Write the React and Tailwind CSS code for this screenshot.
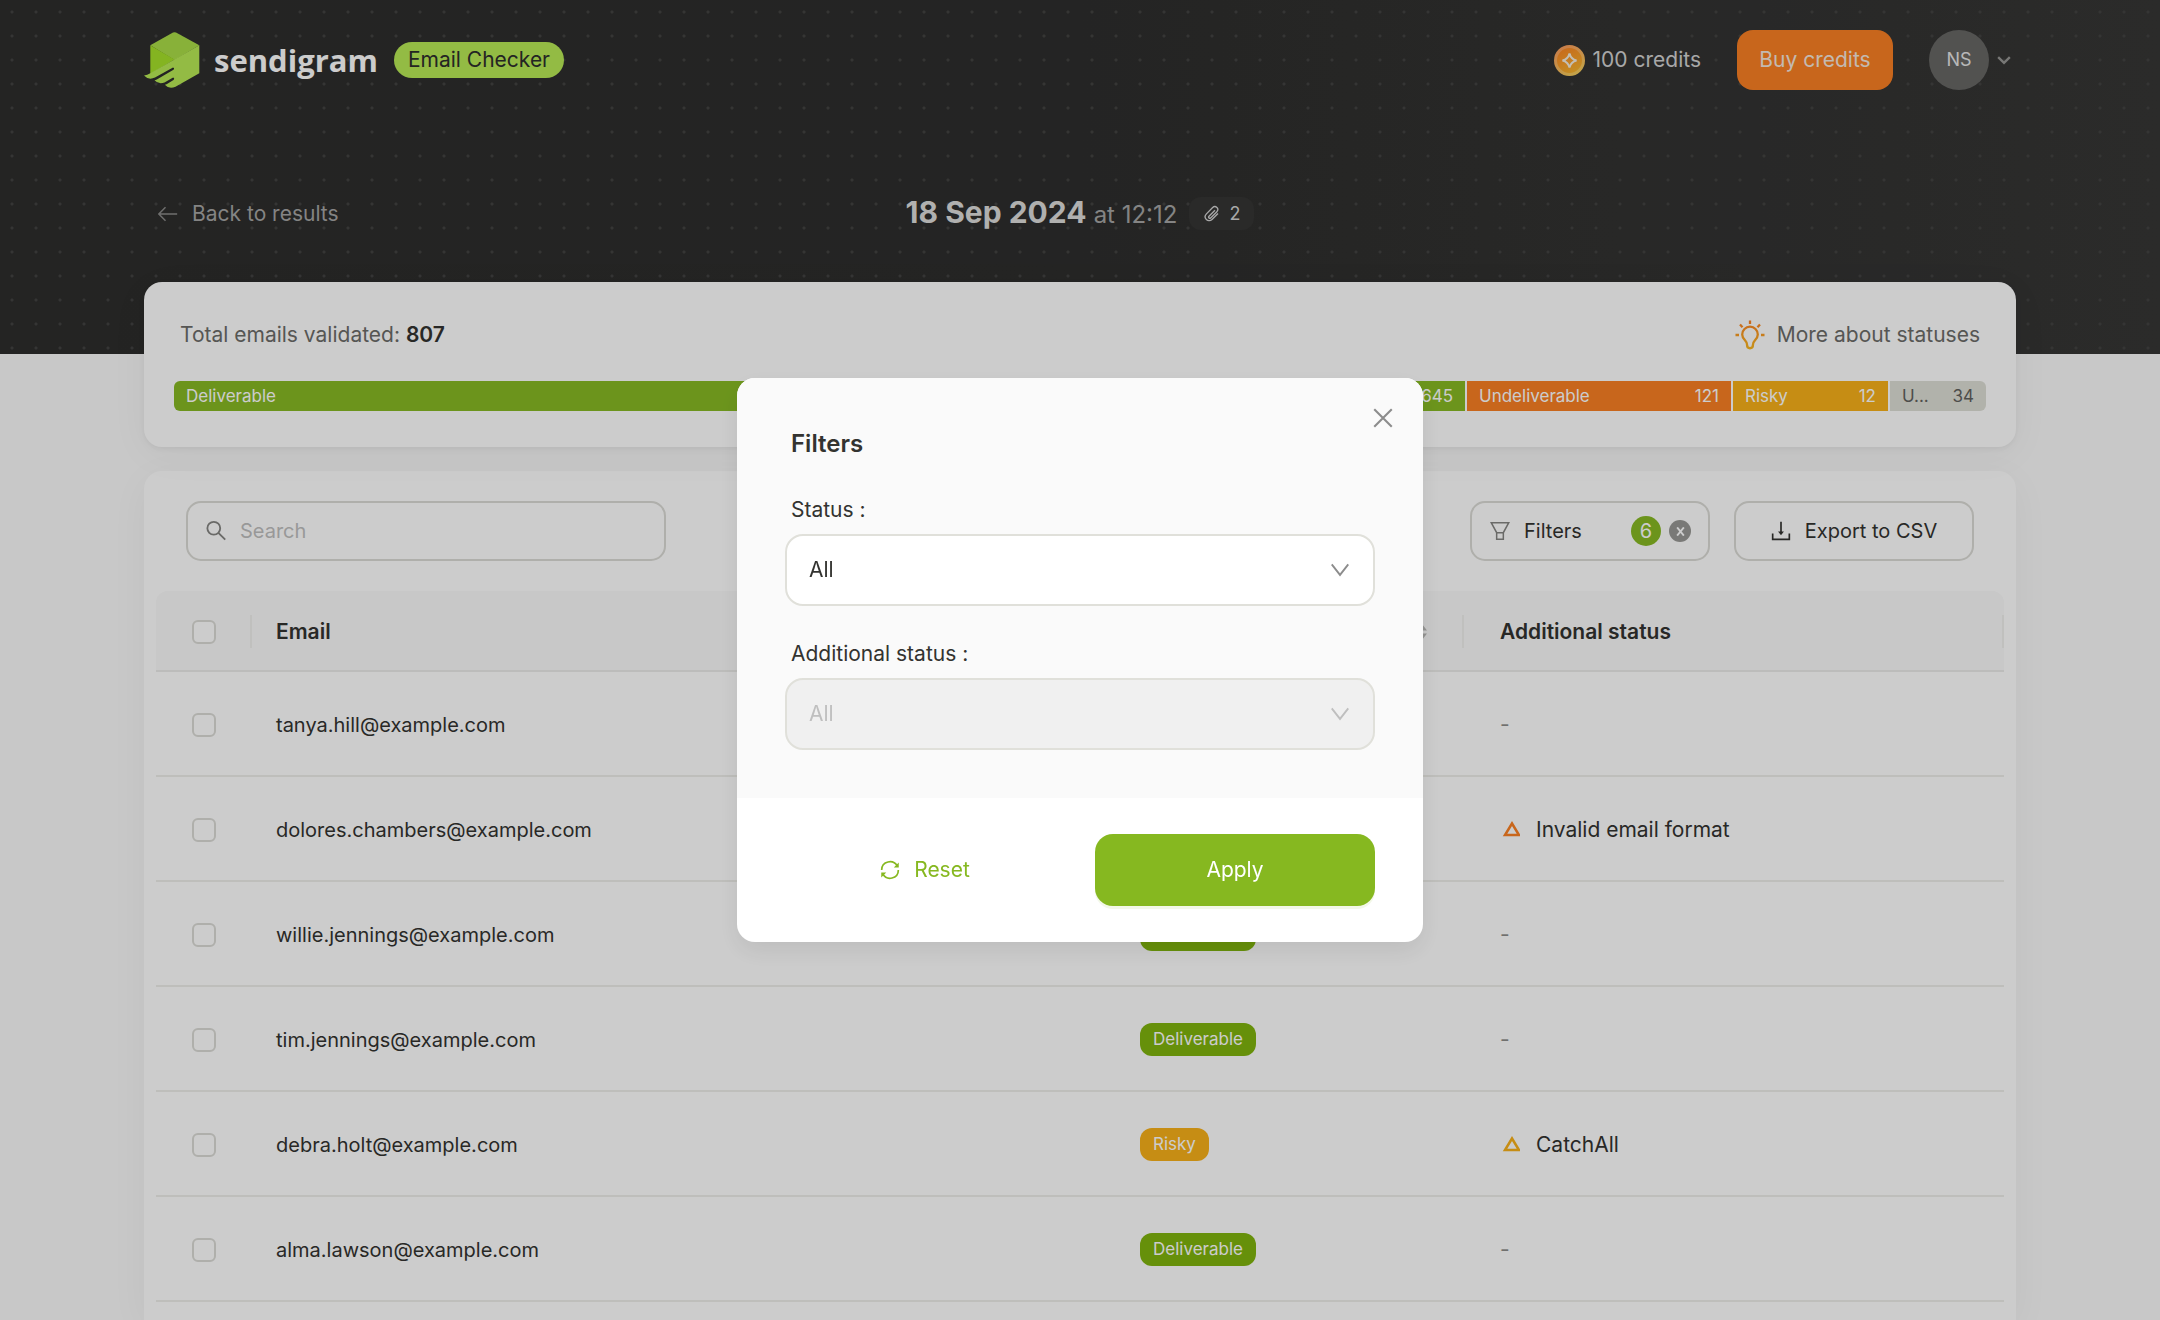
import React, { useState } from 'react';
import clsx from 'clsx';

const segments = [
  { label: 'Deliverable',   count: 645, className: 'flex-1 bg-[#87ba24] text-white'       },
  { label: 'Undeliverable', count: 121, className: 'w-[264px] bg-[#fb8024] text-white'    },
  { label: 'Risky',         count: 12,  className: 'w-[155px] bg-[#f8b119] text-white'    },
  { label: 'U...',          count: 34,  className: 'w-[96px] bg-[#dedfd6] text-[#61615e]' },
];

const rows = [
  { email: 'tanya.hill@example.com',       status: 'Deliverable' },
  { email: 'dolores.chambers@example.com', status: 'Undeliverable', extra: 'Invalid email format' },
  { email: 'willie.jennings@example.com',  status: 'Deliverable' },
  { email: 'tim.jennings@example.com',     status: 'Deliverable' },
  { email: 'debra.holt@example.com',       status: 'Risky', extra: 'CatchAll' },
  { email: 'alma.lawson@example.com',      status: 'Deliverable' },
];

const badgeColors = {
  Deliverable: 'bg-[#80b40d]',
  Undeliverable: 'bg-[#fb8024]',
  Risky: 'bg-[#f8b119]',
};

const Icon = ({ size = 24, width = 1.5, className, children }) => (
  <svg
    width={size}
    height={size}
    viewBox="0 0 24 24"
    fill="none"
    stroke="currentColor"
    strokeWidth={width}
    className={clsx('shrink-0', className)}
    aria-hidden="true"
  >
    {children}
  </svg>
);

const Logo = () => (
  <svg width="56" height="56" viewBox="0 0 56 56" className="shrink-0" aria-hidden="true">
    <path d="M29 .6q1.500-.8 3 0L55.300 13.300 30.500 28 6.300 13.300z" fill="#abde48" />
    <path d="M6.300 13.300 30.500 27.500 6.300 42z" fill="#a5e22a" />
    <path
      d="M55.300 13.300v28L31.500 54.800Q25 57.500 20.800 52.800q1.200-.3 2.200-.9l6.500-4q1.500-1.600-.4-2.300L20.500 50.500Q14.500 52.800 10.500 48.300q1.200-.2 2.300-.9L29.500 37.800q1.500-1.800-.5-2.300L11 45.600Q4.500 48.500 0 43.500q3.300-.4 6.300-2.200z"
      fill="#b8ea56"
    />
  </svg>
);

const CoinIcon = () => (
  <svg width="31" height="31" viewBox="0 0 31 31" fill="none" className="shrink-0" aria-hidden="true">
    <defs>
      <linearGradient id="coin" x1="6" y1="0" x2="22" y2="31" gradientUnits="userSpaceOnUse">
        <stop stopColor="#fb8024" />
        <stop offset="1" stopColor="#f5b82e" />
      </linearGradient>
      <linearGradient id="rim" x1="6" y1="0" x2="22" y2="31" gradientUnits="userSpaceOnUse">
        <stop stopColor="#fb9a5c" />
        <stop offset="1" stopColor="#f5cf5c" />
      </linearGradient>
    </defs>
    <circle cx="15.500" cy="15.500" r="14" fill="url(#coin)" stroke="url(#rim)" strokeWidth="3" />
    <path
      d="M15.500 8.500c1 4 3 6 7 7-4 1-6 3-7 7-1-4-3-6-7-7 4-1 6-3 7-7z"
      stroke="#f4eee2"
      strokeWidth="2"
    />
  </svg>
);

const BulbIcon = () => (
  <svg width="30" height="30" viewBox="0 0 30 30" fill="none" className="shrink-0" aria-hidden="true">
    <defs>
      <linearGradient id="bulb" x1="15" y1="0" x2="15" y2="30" gradientUnits="userSpaceOnUse">
        <stop stopColor="#fb8024" />
        <stop offset="1" stopColor="#f8b920" />
      </linearGradient>
    </defs>
    <path
      d="M12 24.500c0-4-4.800-5-4.800-10a7.800 7.800 0 0 1 15.600 0c0 5-4.800 6-4.800 10 0 5-6 5-6 0zM15 .5V4M5 4.500l2.500 2.700M25 4.500l-2.500 2.700M.5 15H4M26 15h3.500"
      stroke="url(#bulb)"
      strokeWidth="2.300"
    />
  </svg>
);

const WarningIcon = ({ className }) => (
  <svg width="18" height="16" viewBox="0 0 18 16" fill="none" className={className} aria-hidden="true">
    <path d="M10 2.500 17 14H3z" stroke="currentColor" strokeWidth="2.500" />
  </svg>
);

const Checkbox = ({ label }) => (
  <input
    type="checkbox"
    aria-label={label}
    className="block size-6 appearance-none rounded-md border-2 border-[#dbdbd6] bg-white checked:bg-[#87ba24]"
  />
);

const FilterSelect = ({ id, label, disabled }) => (
  <div className="flex flex-col gap-2">
    <label htmlFor={id} className="px-1.5 text-[21px] leading-8 text-[#333330]">{label}</label>
    <div className="relative">
      <select
        id={id}
        disabled={disabled}
        className="block h-[72px] w-full appearance-none rounded-[18px] border-2 border-[#e0e0da] bg-white px-[22px] text-[21px] text-[#333330] opacity-100 disabled:bg-[#f0f0f0] disabled:text-[#bfbfbf]"
      >
        <option>All</option>
      </select>
      <Icon
        size={18}
        width={2.5}
        className={clsx(
          'pointer-events-none absolute top-[27px] right-[26px]',
          disabled ? 'text-[#bfbfbf]' : 'text-[#8c8c8c]'
        )}
      >
        <path d="m1 4.500 11 14 11-14" />
      </Icon>
    </div>
  </div>
);

const Header = () => (
  <header className="h-[354px] bg-[#2d2d2c] bg-[radial-gradient(circle_at_center,#434342_1px,transparent_2px),linear-gradient(90deg,#2d2d2c_0%,#2e2e2d_50%,#363635_100%)] bg-[length:24px_24px,100%_100%] px-36">
    <div className="flex h-[120px] items-center justify-between">
      <a href="#home" className="flex items-center">
        <Logo />
        <span className="ml-3.5 font-['Open_Sans',sans-serif] text-[31px] leading-10 font-bold text-white">sendigram</span>
        <span className="ml-4 rounded-full bg-[#b8ea56] px-3.5 text-[21px] leading-9 text-[#2d2d2c]">Email Checker</span>
      </a>
      <div className="flex items-center">
        <CoinIcon />
        <span className="ml-2 text-[21px] text-[#d3d3d3]">100 credits</span>
        <button className="ml-9 h-15 w-[156px] rounded-2xl bg-[#fb8024] text-[21px] text-[#f4e8de]">Buy credits</button>
        <button className="ml-9 flex items-center gap-2 pr-[5px]" aria-label="Account menu">
          <span className="flex size-15 items-center justify-center rounded-full bg-[#676765] text-lg text-[#e6e6e6]">NS</span>
          <Icon size={14} width={4} className="text-[#969694]">
            <path d="m2 7 10 10L22 7" />
          </Icon>
        </button>
      </div>
    </div>

    <div className="mt-[68px] grid grid-cols-3 items-center">
      <a href="#results" className="flex items-center gap-3.5 pl-3.5 text-[21px] leading-8 text-[#a6a6a5]">
        <Icon size={20} width={1.8} className="text-[#8a8a89]">
          <path d="M23 12H2M9 4l-8 8 8 8" />
        </Icon>
        Back to results
      </a>
      <div className="flex items-center justify-center">
        <h1 className="text-[30px] leading-12 font-bold whitespace-nowrap text-[#dcdcdb]">
          18 Sep 2024 <span className="text-[24px] font-normal text-[#a6a6a5]">at 12:12</span>
        </h1>
        <span className="ml-3 flex h-[33px] items-center gap-2 rounded-xl bg-[#353534] px-3.5 text-lg text-[#d3d3d3]">
          <Icon size={18} width={1.8}>
            <path d="m16 7-8 8c-1.500 1.500.7 3.700 2.200 2.200l8.300-8.300c4-4-2-9-5.600-5.500L4.600 11.800c-5 5 2.300 12.500 7.400 7.400l8-8" />
          </Icon>
          2
        </span>
      </div>
    </div>
  </header>
);

const Summary = () => (
  <section className="relative rounded-[18px] bg-white px-[30px] pt-7 pb-9 shadow-[0_2px_6px_rgba(0,0,0,0.06),0_8px_40px_rgba(0,0,0,0.04)]">
    <div className="flex h-[50px] items-center justify-between px-1.5">
      <p className="text-[21px] text-[#6c6c69]">
        Total emails validated: <b className="font-semibold text-[#333330]">807</b>
      </p>
      <a href="#statuses" className="flex items-center gap-3 text-[21px] text-[#6c6c69]">
        <BulbIcon />
        More about statuses
      </a>
    </div>
    <div className="mt-[21px] flex h-[30px] gap-0.5 overflow-hidden rounded-md text-[17px] leading-[30px]">
      {segments.map((segment) => (
        <div key={segment.label} className={clsx('flex justify-between px-3', segment.className)}>
          <span>{segment.label}</span>
          <span>{segment.count}</span>
        </div>
      ))}
    </div>
  </section>
);

const Toolbar = ({ onFilters }) => (
  <div className="flex items-center gap-6 px-[30px]">
    <label className="mr-auto flex h-15 w-[480px] items-center gap-3 rounded-[15px] border-2 border-[#dbdbd6] px-[18px]">
      <Icon size={22} width={2} className="text-[#858582]">
        <circle cx="8.500" cy="9" r="7" />
        <path d="m13.500 14 7.500 7.500" />
      </Icon>
      <input
        type="search"
        aria-label="Search"
        placeholder="Search"
        className="min-w-0 flex-1 text-xl outline-none placeholder:text-[#bfbfbf]"
      />
    </label>
    <div className="flex h-15 w-60 items-center rounded-[15px] border-2 border-[#dbdbd6] pr-[17px] pl-[18px]">
      <button onClick={onFilters} className="flex flex-1 items-center gap-3.5 text-xl text-[#333330]">
        <Icon size={20} width={1.8} className="text-[#858582]">
          <path d="M1.500 2h21L16 14H8zM8 14h8v8H8z" />
        </Icon>
        Filters
      </button>
      <span className="flex size-[30px] items-center justify-center rounded-full bg-[#87ba24] text-xl text-white">6</span>
      <button
        aria-label="Clear filters"
        className="ml-2 flex size-[22px] items-center justify-center rounded-full bg-[#989895] text-white"
      >
        <Icon size={9} width={5}>
          <path d="m3 1 18 22M21 1 3 23" />
        </Icon>
      </button>
    </div>
    <button className="flex h-15 w-60 items-center justify-center gap-3.5 rounded-[15px] border-2 border-[#dbdbd6] text-xl text-[#333330]">
      <Icon size={20} width={2}>
        <path d="M2 15v7h20v-7M12 1v14" />
        <path d="m8.500 12.500 3.500 4.500 3.500-4.500z" fill="currentColor" stroke="none" />
      </Icon>
      Export to CSV
    </button>
  </div>
);

const SortIcon = () => (
  <svg width="12" height="18" viewBox="0 0 12 18" fill="#b8b8b6" aria-hidden="true">
    <path d="M6 1l5 6.500H1zM6 17l5-6.500H1z" />
  </svg>
);

const HeadDivider = () => <span className="h-[33px] w-0.5 shrink-0 bg-[#f0f0ee]" />;

const ResultsTable = () => (
  <table className="mt-[30px] w-full table-fixed border-separate border-spacing-0 text-xl text-[#333330]">
    <colgroup>
      <col className="w-24" />
      <col />
      <col className="w-[348px]" />
      <col className="w-[540px]" />
    </colgroup>
    <thead>
      <tr className="h-[81px] text-left text-[21px] *:border-b-2 *:border-[#ececea] *:bg-[#fafafa]">
        <th className="rounded-tl-xl p-0 pt-0.5 pl-9">
          <div className="flex items-center justify-between">
            <Checkbox label="Select all" />
            <HeadDivider />
          </div>
        </th>
        <th className="p-0 pt-0.5 pl-6 font-semibold">
          <div className="flex items-center justify-between">
            Email
            <HeadDivider />
          </div>
        </th>
        <th className="p-0 pt-0.5 pl-6 font-semibold">
          <div className="flex items-center">
            Status
            <span className="mr-[34px] ml-auto"><SortIcon /></span>
            <HeadDivider />
          </div>
        </th>
        <th className="rounded-tr-xl p-0 pt-0.5 pl-9 font-semibold">
          <div className="flex items-center justify-between">
            Additional status
            <HeadDivider />
          </div>
        </th>
      </tr>
    </thead>
    <tbody>
      {rows.map((row) => (
        <tr key={row.email} className="h-[105px] *:border-b-2 *:border-[#eeeeea]">
          <td className="p-0 pt-0.5 pl-9"><Checkbox label={`Select ${row.email}`} /></td>
          <td className="p-0 pt-0.5 pl-6">{row.email}</td>
          <td className="p-0 pt-0.5 pl-6">
            <span className={clsx('inline-block rounded-xl px-[13px] text-[17px] leading-[33px] text-white', badgeColors[row.status])}>
              {row.status}
            </span>
          </td>
          <td className="p-0 pt-0.5 pl-9 text-[21px]">
            {row.extra ? (
              <span className="flex items-center gap-4 pl-0.5">
                <WarningIcon className={row.status === 'Risky' ? 'text-[#f8b119]' : 'text-[#fb8024]'} />
                {row.extra}
              </span>
            ) : (
              <span className="text-[#8c8c8a]">-</span>
            )}
          </td>
        </tr>
      ))}
    </tbody>
  </table>
);

const FiltersModal = ({ onClose }) => (
  <div className="fixed inset-0 z-10 flex items-center justify-center bg-black/20">
    <form
      role="dialog"
      aria-label="Filters"
      onSubmit={(e) => e.preventDefault()}
      className="relative w-[686px] overflow-hidden rounded-[18px] bg-white shadow-[0_9px_24px_rgba(0,0,0,0.08)]"
    >
      <button
        type="button"
        onClick={onClose}
        aria-label="Close"
        className="absolute top-[30px] right-[30px] text-[#8c8c8c]"
      >
        <Icon size={20} width={2.5}>
          <path d="m1.500 1.500 21 21M22.500 1.500l-21 21" />
        </Icon>
      </button>
      <div className="flex flex-col gap-8 bg-[#fafafa] px-12 pt-12 pb-12">
        <h2 className="px-1.5 text-2xl leading-9 font-semibold text-[#333330]">Filters</h2>
        <FilterSelect id="status" label="Status :" />
        <FilterSelect id="additional-status" label="Additional status :" disabled />
      </div>
      <div className="grid grid-cols-2 gap-[30px] px-12 py-9">
        <button type="reset" className="flex h-[72px] items-center justify-center gap-3.5 text-[21px] text-[#86b820]">
          <Icon size={20} width={2}>
            <path d="M2 12C2 1 16-1 20.500 7M22 12c0 11-14 13-18.500 5" />
            <path d="M22.500 3v6h-6zM1.500 21v-6h6z" fill="currentColor" stroke="none" />
          </Icon>
          Reset
        </button>
        <button
          type="submit"
          className="h-[72px] rounded-[18px] bg-[#86b820] text-[21px] text-white shadow-[0_3px_0_rgba(134,184,32,0.1)]"
        >
          Apply
        </button>
      </div>
    </form>
  </div>
);

const App = () => {
  const [filtersOpen, setFiltersOpen] = useState(true);

  return (
    <div className="flex min-h-screen flex-col bg-[#fafafa] font-[Inter,sans-serif]">
      <Header />
      <main className="-mt-[72px] flex flex-1 flex-col gap-6 px-36">
        <Summary />
        <section className="flex-1 rounded-t-[18px] bg-white px-3 pt-[30px] shadow-[0_8px_40px_rgba(0,0,0,0.04)]">
          <Toolbar onFilters={() => setFiltersOpen(true)} />
          <ResultsTable />
        </section>
      </main>
      {filtersOpen && <FiltersModal onClose={() => setFiltersOpen(false)} />}
    </div>
  );
};

export default App;
